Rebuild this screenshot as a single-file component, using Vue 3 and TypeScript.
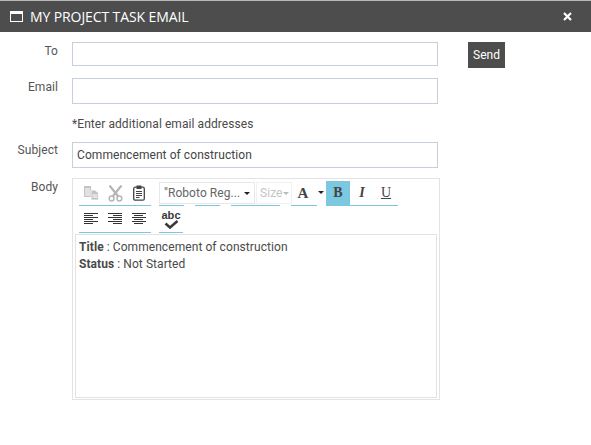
<script setup lang="ts">
const lineWidths = [14, 9, 14, 9, 14, 9]

const lineY = (i: number) => i * 2 + 1
const rightX = (w: number) => 14 - w
const centerX = (w: number) => Math.floor((14 - w) / 2)
</script>

<template>
  <div class="dialog">
    <header class="titlebar">
      <svg class="title-icon" width="13" height="11" viewBox="0 0 13 11">
        <rect x="0.5" y="0.5" width="12" height="10" fill="none" stroke="#fff" />
        <rect x="0" y="0" width="13" height="3" fill="#fff" />
      </svg>
      <span class="title">MY PROJECT TASK EMAIL</span>
      <svg class="close" width="9" height="9" viewBox="0 0 9 9">
        <path d="M1 1 L8 8 M8 1 L1 8" stroke="#fff" stroke-width="2.2" />
      </svg>
    </header>

    <div class="form">
      <label class="label label-to">To</label>
      <input class="field field-to" type="text" />
      <button class="send">Send</button>

      <label class="label label-email">Email</label>
      <input class="field" type="text" />
      <span></span>

      <span></span>
      <div class="note">*Enter additional email addresses</div>
      <span></span>

      <label class="label">Subject</label>
      <input class="field subject" type="text" value="Commencement of construction" />
      <span></span>

      <label class="label label-body">Body</label>
      <div class="editor">
        <div class="toolbar">
          <div class="row">
            <div class="group clip">
              <span class="tool">
                <svg width="15" height="14" viewBox="0 0 15 14">
                  <path d="M0 0h7v11H0z" fill="#c4c4c4" />
                  <path d="M7 4h4l3.5 3v7H7z" fill="#c4c4c4" stroke="#fff" stroke-width="0.8" />
                  <path d="M1 3h5M1 5h5M1 7h5M1 9h5M8.5 9h5M8.5 11h5" stroke="#fff" />
                </svg>
              </span>
              <span class="tool">
                <svg width="15" height="17" viewBox="0 0 15 17">
                  <path d="M1.5 0.5 L10 11 M13.5 0.5 L5 11" stroke="#b5b5b5" stroke-width="2.2" fill="none" />
                  <circle cx="3.6" cy="13.5" r="2.4" fill="none" stroke="#b5b5b5" stroke-width="1.5" />
                  <circle cx="11.4" cy="13.5" r="2.4" fill="none" stroke="#b5b5b5" stroke-width="1.5" />
                </svg>
              </span>
              <span class="tool">
                <svg width="12" height="16" viewBox="0 0 12 16">
                  <rect x="0.7" y="2.2" width="10.6" height="13" rx="1.5" fill="none" stroke="#444" stroke-width="1.3" />
                  <rect x="3.5" y="0.5" width="5" height="3.5" fill="#444" />
                  <path d="M3 6.5h6M3 8.5h6M3 10.5h6M3 12.5h3.5" stroke="#444" />
                </svg>
              </span>
            </div>

            <div class="group font-group">
              <span class="seg"></span>
              <span class="seg"></span>
              <span class="seg wide"></span>
              <div class="selects">
                <div class="select font-select">
                  <span class="select-text">"Roboto Reg...</span>
                  <i class="caret"></i>
                </div>
                <div class="select size-select">
                  <span class="select-text muted">Size</span>
                  <i class="caret light"></i>
                </div>
              </div>
            </div>

            <div class="group color-group">
              <span class="letter color-a">A</span>
              <i class="caret color-caret"></i>
            </div>

            <div class="group style-group">
              <span class="letter active">B</span>
              <span class="letter italic">I</span>
              <span class="letter underline">U</span>
            </div>
          </div>

          <div class="row row-two">
            <div class="group clip">
              <span class="tool">
                <svg class="align" width="14" height="12" viewBox="0 0 14 12">
                  <rect v-for="(w, i) in lineWidths" :key="i" x="0" :y="lineY(i) - 1" :width="w" height="1" fill="#333" />
                </svg>
              </span>
              <span class="tool">
                <svg class="align" width="14" height="12" viewBox="0 0 14 12">
                  <rect v-for="(w, i) in lineWidths" :key="i" :x="rightX(w)" :y="lineY(i) - 1" :width="w" height="1" fill="#333" />
                </svg>
              </span>
              <span class="tool">
                <svg class="align" width="14" height="12" viewBox="0 0 14 12">
                  <rect v-for="(w, i) in lineWidths" :key="i" :x="centerX(w)" :y="lineY(i) - 1" :width="w" height="1" fill="#333" />
                </svg>
              </span>
            </div>

            <div class="group spell">
              <span class="abc">abc</span>
              <svg width="15" height="9" viewBox="0 0 15 9">
                <path d="M1.5 3.5 L6 7.5 L13.5 1" stroke="#3a3a3a" stroke-width="2.6" fill="none" />
              </svg>
            </div>
          </div>
        </div>

        <div class="content">
          <p><b>Title</b> : Commencement of construction</p>
          <p><b>Status</b> : Not Started</p>
        </div>
      </div>
      <span></span>
    </div>
  </div>
</template>

<style>
html,
body {
  margin: 0;
  background: #fff;
}
</style>

<style scoped>
.dialog {
  width: 591px;
  height: 445px;
  overflow: hidden;
  font-family: Roboto, 'Liberation Sans', sans-serif;
  font-size: 12px;
  letter-spacing: 0.07px;
  color: #4a4a4a;
}

.titlebar {
  height: 31px;
  border-top: 1px solid #b8b8b8;
  background: #4d4d4d;
  display: flex;
  align-items: center;
  padding: 0 19px 0 10px;
  color: #fff;
}

.title-icon {
  margin-right: 7px;
}

.title {
  flex: 1;
  font-family: 'Open Sans', sans-serif;
  font-size: 14px;
  letter-spacing: -0.1px;
}

.form {
  display: grid;
  grid-template-columns: 58px 368px auto;
  column-gap: 14px;
  align-items: start;
  justify-items: start;
  padding-top: 10px;
}

.label {
  justify-self: end;
  line-height: 16px;
  color: #555;
}

.label-to,
.label-email,
.label-body {
  margin-top: 1px;
}

.field {
  box-sizing: border-box;
  width: 366px;
  height: 26px;
  border: 1px solid #c5d0dc;
  padding: 0 4px;
  margin: 0 0 10px;
  font-family: inherit;
  font-size: 12px;
  letter-spacing: inherit;
  color: #444;
  background: #fff;
  outline: none;
}

.field-to {
  height: 24px;
  margin-bottom: 12px;
}

.note {
  height: 28px;
  line-height: 20px;
  color: #4a4a4a;
}

.send {
  box-sizing: border-box;
  width: 37px;
  height: 26px;
  margin-left: 14px;
  border: 0;
  padding: 0;
  background: #4d4d4d;
  color: #fff;
  font-family: inherit;
  font-size: 12px;
}

.editor {
  box-sizing: border-box;
  width: 368px;
  height: 222px;
  border: 1px solid #e3e3e3;
  padding: 2px 2px 1px 2px;
  display: flex;
  flex-direction: column;
}

.toolbar {
  padding-left: 4px;
}

.row {
  display: flex;
  height: 24px;
  margin-bottom: 3px;
}

.row-two {
  margin-bottom: 2px;
}

.group {
  display: flex;
  border-bottom: 1px solid #7cc8e0;
  height: 24px;
}

.clip {
  width: 72px;
  justify-content: space-around;
  align-items: center;
}

.tool {
  width: 24px;
  display: flex;
  align-items: center;
  justify-content: center;
}

.align {
  margin-bottom: 2px;
}

.font-group {
  position: relative;
  margin-left: 8px;
  border: 0;
  width: 121px;
  gap: 11px;
}

.seg {
  width: 25px;
  height: 24px;
  border-bottom: 1px solid #7cc8e0;
}

.seg.wide {
  width: 49px;
}

.selects {
  position: absolute;
  left: 0;
  top: 1px;
  display: flex;
  gap: 1px;
}

.select {
  box-sizing: border-box;
  height: 22px;
  border: 1px solid #e8e8e8;
  background: #fff;
  display: flex;
  align-items: center;
  padding-left: 4px;
  position: relative;
}

.font-select {
  width: 96px;
}

.size-select {
  width: 36px;
  border-color: #f2f2f2;
  padding-left: 3px;
}

.select-text {
  color: #666;
  white-space: nowrap;
}

.select-text.muted {
  color: #c4c4c4;
}

.caret {
  display: block;
  position: absolute;
  right: 4px;
  top: 9px;
  width: 0;
  height: 0;
  border-left: 3px solid transparent;
  border-right: 3px solid transparent;
  border-top: 3px solid #222;
}

.caret.light {
  right: 2px;
  border-top-color: #bbb;
}

.color-group {
  position: relative;
  width: 26px;
  margin-left: 11px;
}

.color-caret {
  right: -7px;
  top: 10px;
}

.letter {
  width: 24px;
  height: 24px;
  font-family: 'Liberation Serif', serif;
  font-weight: 700;
  font-size: 14px;
  line-height: 24px;
  text-align: center;
  color: #444;
}

.color-a {
  font-size: 15px;
}

.active {
  background: #7cc8e0;
}

.italic {
  font-style: italic;
}

.underline {
  text-decoration: underline;
  font-weight: 400;
}

.style-group {
  margin-left: 9px;
}

.spell {
  width: 24px;
  margin-left: 8px;
  flex-direction: column;
  align-items: center;
  height: 24px;
}

.abc {
  font-family: 'Liberation Sans', sans-serif;
  font-weight: 700;
  font-size: 11px;
  line-height: 9px;
  margin-top: 3px;
  color: #3a3a3a;
}

.content {
  box-sizing: border-box;
  flex: 1;
  border: 1px solid #e3e3e3;
  padding: 4px 3px;
  width: 362px;
}

.content p {
  margin: 0;
  line-height: 17px;
  color: #4a4a4a;
}

.content b {
  font-weight: 700;
}
</style>
